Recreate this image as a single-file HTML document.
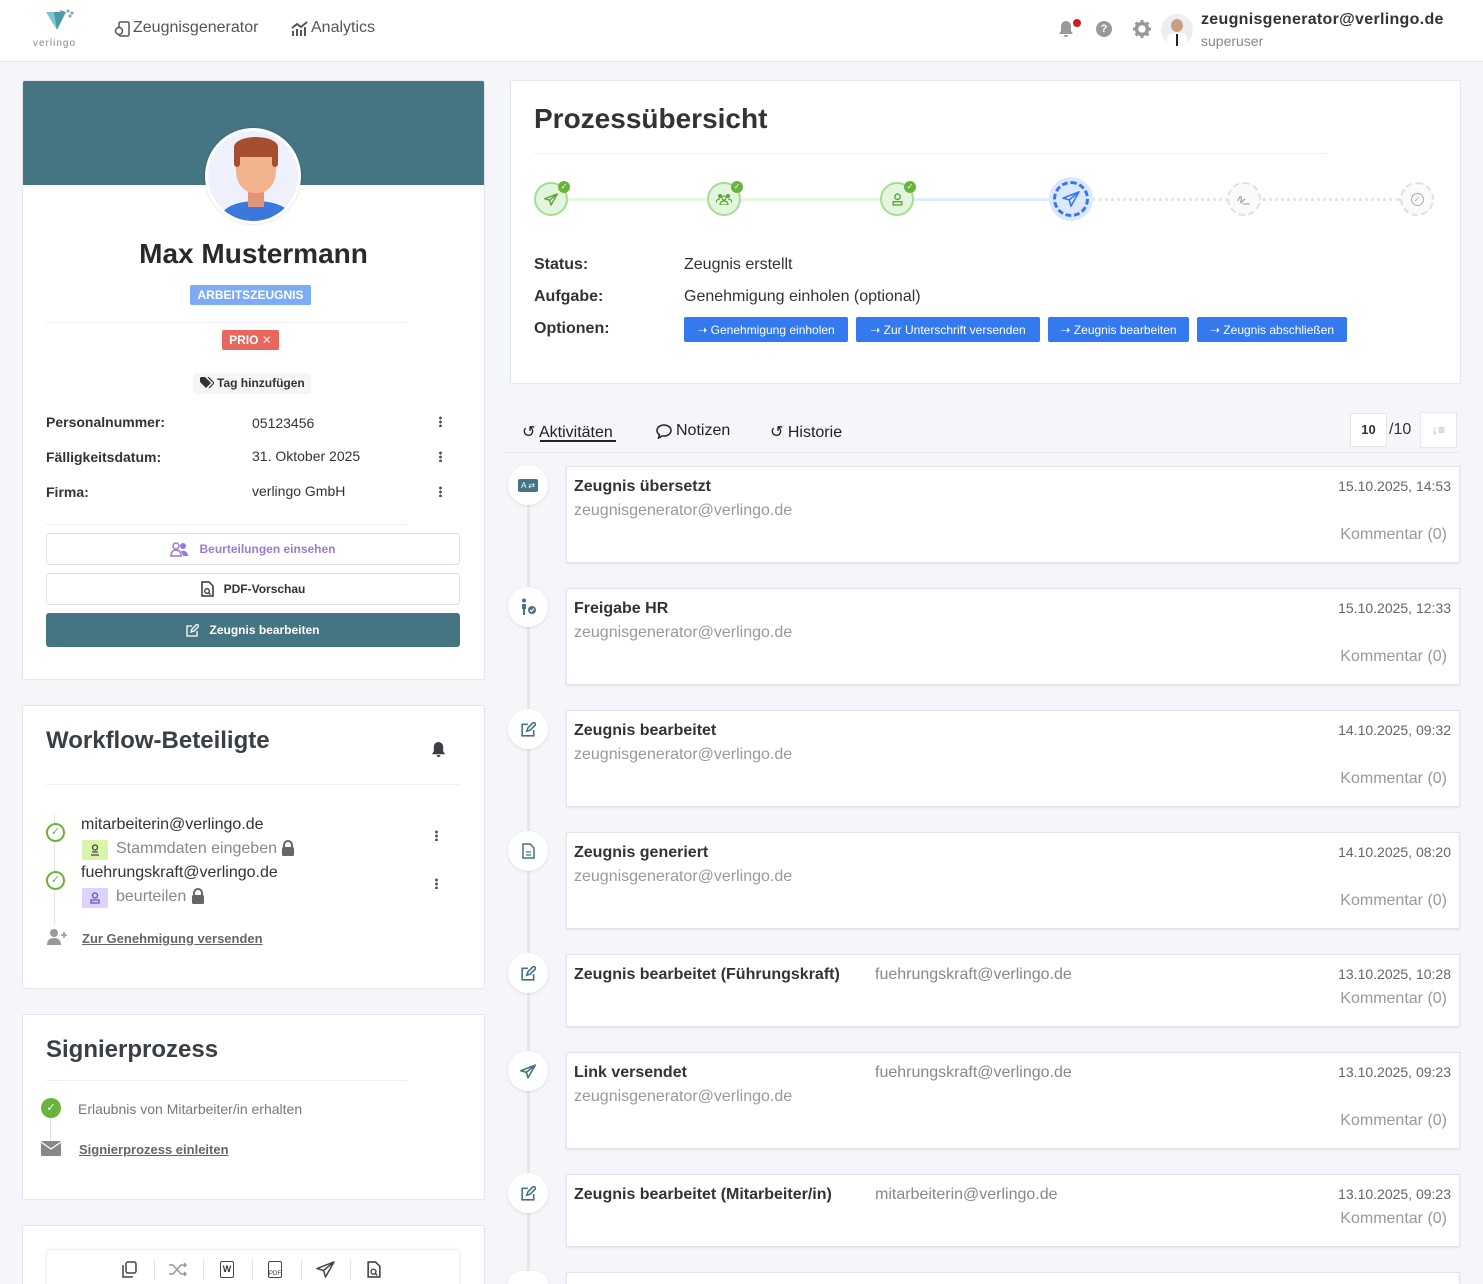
<!DOCTYPE html>
<html style="height:1284px;overflow:hidden"><head><meta charset="utf-8"><style>
*{box-sizing:border-box;margin:0;padding:0}
body{width:1483px;height:1284px;overflow:hidden;background:#f4f6f9;font-family:"Liberation Sans",sans-serif;color:#333;position:relative}
.a{position:absolute}
.card{position:absolute;background:#fff;border:1px solid #e3e6ea;border-radius:3px}
.hdr{position:absolute;left:0;top:0;width:1483px;height:62px;background:#fff;border-bottom:1px solid #e1e5ea}
.lbl{font-weight:bold;font-size:14px;color:#333}
.dots{position:absolute;width:3px;height:11px;background:radial-gradient(circle,#555 1.3px,transparent 1.6px) 0 0/3px 4px repeat-y}
.btn{position:absolute;border:1px solid #dde0e4;border-radius:3px;background:#fff;font-size:12px;font-weight:bold;display:flex;align-items:center;justify-content:center;gap:10px}
.bb{position:absolute;top:317px;height:25px;background:#3579ef;color:#fff;font-size:12px;border-radius:2px;display:flex;align-items:center;justify-content:center}
.tc{position:absolute;left:566px;width:894px;background:#fff;border:1px solid #e0e3e7;box-shadow:0 1px 2px rgba(0,0,0,.08)}
.tc b{position:absolute;left:7px;top:11px;font-size:16px;color:#333}
.tc .m{position:absolute;left:7px;top:35px;font-size:16px;color:#999}
.tc .d{position:absolute;right:8px;top:11px;font-size:14px;color:#666}
.tc .k{position:absolute;right:12px;font-size:16px;color:#999}
.tc .e{position:absolute;left:308px;top:11px;font-size:16px;color:#888}
.ic{position:absolute;left:508px;width:40px;height:40px;border-radius:50%;background:#fff;box-shadow:0 1px 3px rgba(0,0,0,.1);display:flex;align-items:center;justify-content:center}
.st{position:absolute;top:182px;width:34px;height:34px;border-radius:50%;display:flex;align-items:center;justify-content:center}
.g{background:#e3f5dc;border:2px solid #a8dc94}
.ck{position:absolute;top:-3px;right:-4px;width:12px;height:12px;border-radius:50%;background:#6ab43e;color:#fff;font-size:8px;line-height:12px;text-align:center}
.gy{background:#fafafa;border:2px dashed #e0e0e0}
</style></head><body>
<div class="hdr"></div>
<svg class="a" style="left:44px;top:8px" width="32" height="30" viewBox="0 0 32 30"><polygon points="2,4 16,4 13,22" fill="#7cc6cf"/><polygon points="10,4 22,4 13,22" fill="#4a9aa8"/><polygon points="16,2 22,4 18,10" fill="#6b8fb8"/><circle cx="24" cy="3" r="1.5" fill="#7aa"/><circle cx="28" cy="5" r="1.5" fill="#7aa"/><circle cx="26" cy="8" r="1.5" fill="#7aa"/></svg>
<div class="a" style="left:33px;top:38px;font-size:10px;color:#888;letter-spacing:1px">verlingo</div>
<svg class="a" style="left:114px;top:20px" width="17" height="18" viewBox="0 0 17 18"><rect x="5" y="2" width="10" height="14" rx="1.5" fill="none" stroke="#555" stroke-width="1.5"/><circle cx="5" cy="11" r="3.5" fill="#fff" stroke="#555" stroke-width="1.5"/></svg>
<div class="a" style="left:133px;top:19px;font-size:16px;color:#555">Zeugnisgenerator</div>
<svg class="a" style="left:291px;top:21px" width="18" height="16" viewBox="0 0 18 16"><path d="M2 15V10M6 15V8M10 15V9M14 15V6M1 7l5-4 4 3 6-5" stroke="#555" stroke-width="2" fill="none"/></svg>
<div class="a" style="left:311px;top:19px;font-size:16px;color:#555">Analytics</div>
<svg class="a" style="left:1058px;top:20px" width="16" height="18" viewBox="0 0 16 18"><path d="M8 1a5 5 0 0 0-5 5v5l-2 3h14l-2-3V6a5 5 0 0 0-5-5zM6 15a2 2 0 0 0 4 0z" fill="#999"/></svg>
<div class="a" style="left:1073px;top:19px;width:8px;height:8px;border-radius:50%;background:#c82121"></div>
<div class="a" style="left:1096px;top:21px;width:16px;height:16px;border-radius:50%;background:#999;color:#fff;font-size:11px;font-weight:bold;text-align:center;line-height:16px">?</div>
<svg class="a" style="left:1133px;top:20px" width="18" height="18" viewBox="0 0 18 18"><circle cx="9" cy="9" r="5.5" fill="none" stroke="#999" stroke-width="3.5"/><path d="M9 0v4M9 14v4M0 9h4M14 9h4M2.6 2.6l2.8 2.8M12.6 12.6l2.8 2.8M2.6 15.4l2.8-2.8M12.6 5.4l2.8-2.8" stroke="#999" stroke-width="3"/></svg>
<div class="a" style="left:1161px;top:14px;width:32px;height:32px;border-radius:50%;background:#eee;overflow:hidden"><div class="a" style="left:10px;top:5px;width:12px;height:13px;border-radius:50%;background:#c99f83"></div><div class="a" style="left:6px;top:19px;width:20px;height:14px;background:#fff;border-radius:6px 6px 0 0"></div><div class="a" style="left:15px;top:20px;width:2px;height:12px;background:#222"></div></div>
<div class="a" style="left:1201px;top:11px;font-size:16px;font-weight:bold;color:#333;letter-spacing:.3px">zeugnisgenerator@verlingo.de</div>
<div class="a" style="left:1201px;top:33px;font-size:14px;color:#888">superuser</div>

<div class="card" style="left:22px;top:80px;width:463px;height:600px;overflow:hidden">
 <div class="a" style="left:0;top:0;width:463px;height:104px;background:#457482"></div>
</div>
<div class="a" style="left:205px;top:128px;width:96px;height:96px;border-radius:50%;background:#eef0fb;border:3px solid #fff;box-shadow:0 0 2px rgba(0,0,0,.2);overflow:hidden">
 <div class="a" style="left:14px;top:70px;width:68px;height:30px;border-radius:50% 50% 0 0;background:#3a78de"></div>
 <div class="a" style="left:40px;top:56px;width:16px;height:20px;background:#e0957a"></div>
 <div class="a" style="left:28px;top:14px;width:40px;height:48px;border-radius:45%;background:#f1b38c"></div>
 <div class="a" style="left:26px;top:6px;width:44px;height:20px;border-radius:50% 50% 10% 20%;background:#a84e30"></div>
 <div class="a" style="left:26px;top:20px;width:6px;height:16px;background:#a84e30;border-radius:0 0 3px 3px"></div>
 <div class="a" style="left:64px;top:20px;width:6px;height:16px;background:#a84e30;border-radius:0 0 3px 3px"></div>
</div>
<div class="a" style="left:22px;top:238px;width:463px;text-align:center;font-size:28px;font-weight:bold;color:#2a2a2a">Max Mustermann</div>
<div class="a" style="left:190px;top:285px;width:121px;height:20px;background:#7eabf5;border-radius:2px;color:#fff;font-size:12px;font-weight:bold;text-align:center;line-height:20px">ARBEITSZEUGNIS</div>
<div class="a" style="left:46px;top:322px;width:361px;height:1px;background:#eef0f2"></div>
<div class="a" style="left:222px;top:330px;width:57px;height:20px;background:#e8685e;border-radius:2px;color:#fff;font-size:12px;font-weight:bold;text-align:center;line-height:20px">PRIO <span style="font-weight:normal;opacity:.8">✕</span></div>
<div class="a" style="left:193px;top:373px;width:118px;height:21px;background:#f4f5f7;border-radius:3px;font-size:12px;font-weight:bold;line-height:21px;color:#333;padding-left:24px">Tag hinzufügen</div>
<svg class="a" style="left:200px;top:377px" width="14" height="12" viewBox="0 0 14 12"><path d="M0 1v4l6 6 5-5-6-6H1z" fill="#333"/><path d="M8 0l6 6-5 5" stroke="#333" stroke-width="1.2" fill="none"/></svg>
<div class="a lbl" style="left:46px;top:414px">Personalnummer:</div><div class="a" style="left:252px;top:415px;font-size:14px">05123456</div><div class="dots" style="left:439px;top:416px"></div>
<div class="a lbl" style="left:46px;top:449px">Fälligkeitsdatum:</div><div class="a" style="left:252px;top:448px;font-size:14px">31. Oktober 2025</div><div class="dots" style="left:439px;top:451px"></div>
<div class="a lbl" style="left:46px;top:484px">Firma:</div><div class="a" style="left:252px;top:483px;font-size:14px">verlingo GmbH</div><div class="dots" style="left:439px;top:486px"></div>
<div class="a" style="left:46px;top:524px;width:361px;height:1px;background:#eef0f2"></div>
<div class="btn" style="left:46px;top:533px;width:414px;height:32px;color:#9a7ad8"><svg width="19" height="15" viewBox="0 0 19 15"><circle cx="6" cy="4" r="3" fill="none" stroke="#9a7ad8" stroke-width="1.5"/><path d="M1 14c0-4 2-6 5-6s5 2 5 6z" fill="none" stroke="#9a7ad8" stroke-width="1.5"/><circle cx="13" cy="4" r="3" fill="#9a7ad8"/><path d="M11 9c4-1 7 1 7 5h-5" fill="#9a7ad8"/></svg>Beurteilungen einsehen</div>
<div class="btn" style="left:46px;top:573px;width:414px;height:32px;color:#333"><svg width="13" height="16" viewBox="0 0 13 16"><path d="M1 1h7l4 4v10H1z" fill="none" stroke="#333" stroke-width="1.5"/><circle cx="6" cy="10" r="2.3" fill="none" stroke="#333" stroke-width="1.3"/><path d="M7.5 11.5l2 2" stroke="#333" stroke-width="1.3"/></svg>PDF-Vorschau</div>
<div class="btn" style="left:46px;top:613px;width:414px;height:34px;background:#457482;border-color:#457482;color:#fff"><svg width="13" height="13" viewBox="0 0 13 13"><path d="M6 2H1v10h10V7" fill="none" stroke="#fff" stroke-width="1.3"/><path d="M5 8l1-3 5-5 2 2-5 5z" fill="none" stroke="#fff" stroke-width="1.3"/></svg>Zeugnis bearbeiten</div>

<div class="card" style="left:22px;top:705px;width:463px;height:284px"></div>
<div class="a" style="left:46px;top:727px;font-size:24px;font-weight:bold;color:#3a3f45">Workflow-Beteiligte</div>
<svg class="a" style="left:431px;top:741px" width="15" height="17" viewBox="0 0 16 18"><path d="M8 1a5 5 0 0 0-5 5v5l-2 3h14l-2-3V6a5 5 0 0 0-5-5zM6 15a2 2 0 0 0 4 0z" fill="#3a3f45"/></svg>
<div class="a" style="left:46px;top:784px;width:414px;height:1px;background:#eef0f2"></div>
<div class="a" style="left:54px;top:814px;width:1px;height:110px;background:#e4e4e4"></div>
<div class="a" style="left:46px;top:823px;width:19px;height:19px;border-radius:50%;border:2px solid #6ab43e;background:#fff;color:#6ab43e;font-size:11px;text-align:center;line-height:15px">✓</div>
<div class="a" style="left:81px;top:816px;font-size:16px;color:#333">mitarbeiterin@verlingo.de</div>
<div class="a" style="left:82px;top:840px;width:26px;height:20px;background:#d8f5a8;border-radius:2px"><svg class="a" style="left:8px;top:4px" width="10" height="12" viewBox="0 0 10 12"><circle cx="5" cy="3.5" r="2.5" fill="none" stroke="#444" stroke-width="1.3"/><path d="M1 11h8M2 8h6" stroke="#444" stroke-width="1.3"/></svg></div>
<div class="a" style="left:116px;top:840px;font-size:16px;color:#888">Stammdaten eingeben</div>
<svg class="a" style="left:281px;top:840px" width="14" height="16" viewBox="0 0 14 16"><path d="M3 7V5a4 4 0 0 1 8 0v2" fill="none" stroke="#666" stroke-width="2"/><rect x="1" y="7" width="12" height="9" rx="1.5" fill="#666"/></svg>
<div class="dots" style="left:435px;top:830px"></div>
<div class="a" style="left:46px;top:871px;width:19px;height:19px;border-radius:50%;border:2px solid #6ab43e;background:#fff;color:#6ab43e;font-size:11px;text-align:center;line-height:15px">✓</div>
<div class="a" style="left:81px;top:864px;font-size:16px;color:#333">fuehrungskraft@verlingo.de</div>
<div class="a" style="left:82px;top:888px;width:26px;height:20px;background:#dcd2fa;border-radius:2px"><svg class="a" style="left:8px;top:4px" width="10" height="12" viewBox="0 0 10 12"><circle cx="5" cy="3.5" r="2.5" fill="none" stroke="#6a4fc0" stroke-width="1.3"/><path d="M1 11h8V8H1z" fill="none" stroke="#6a4fc0" stroke-width="1.3"/></svg></div>
<div class="a" style="left:116px;top:888px;font-size:16px;color:#888">beurteilen</div>
<svg class="a" style="left:191px;top:888px" width="14" height="16" viewBox="0 0 14 16"><path d="M3 7V5a4 4 0 0 1 8 0v2" fill="none" stroke="#666" stroke-width="2"/><rect x="1" y="7" width="12" height="9" rx="1.5" fill="#666"/></svg>
<div class="dots" style="left:435px;top:878px"></div>
<svg class="a" style="left:47px;top:929px" width="21" height="16" viewBox="0 0 21 16"><circle cx="7" cy="4" r="4" fill="#999"/><path d="M0 16c0-5 3-7 7-7s7 2 7 7z" fill="#999"/><path d="M17 3v6M14 6h6" stroke="#999" stroke-width="1.6"/></svg>
<div class="a" style="left:82px;top:931px;font-size:13px;font-weight:bold;color:#666;text-decoration:underline">Zur Genehmigung versenden</div>

<div class="card" style="left:22px;top:1014px;width:463px;height:186px"></div>
<div class="a" style="left:46px;top:1036px;font-size:24px;font-weight:bold;color:#3a3f45">Signierprozess</div>
<div class="a" style="left:46px;top:1080px;width:361px;height:1px;background:#eef0f2"></div>
<div class="a" style="left:50px;top:1118px;width:1px;height:24px;background:#e0e0e0"></div>
<div class="a" style="left:41px;top:1098px;width:20px;height:20px;border-radius:50%;background:#6ab43e;color:#fff;font-size:11px;text-align:center;line-height:20px">✓</div>
<div class="a" style="left:78px;top:1101px;font-size:14px;color:#777">Erlaubnis von Mitarbeiter/in erhalten</div>
<svg class="a" style="left:41px;top:1141px" width="20" height="15" viewBox="0 0 20 15"><rect width="20" height="15" rx="1" fill="#888"/><path d="M0 1l10 7 10-7" stroke="#fff" stroke-width="1.3" fill="none"/></svg>
<div class="a" style="left:79px;top:1142px;font-size:13px;font-weight:bold;color:#666;text-decoration:underline">Signierprozess einleiten</div>

<div class="card" style="left:22px;top:1225px;width:463px;height:70px"></div>
<div class="a" style="left:46px;top:1249px;width:414px;height:40px;background:#fff;border:1px solid #eceef0;border-radius:4px;box-shadow:0 1px 3px rgba(0,0,0,.06)"></div>
<svg class="a" style="left:121px;top:1261px" width="16" height="17" viewBox="0 0 16 17"><rect x="5" y="1" width="10" height="11" rx="2" fill="none" stroke="#444" stroke-width="1.5"/><path d="M3 5H2v11h9v-1" fill="none" stroke="#444" stroke-width="1.5"/></svg>
<div class="a" style="left:154px;top:1260px;width:1px;height:20px;background:#e4e4e4"></div>
<svg class="a" style="left:169px;top:1262px" width="19" height="15" viewBox="0 0 19 15"><path d="M0 3h4l8 9h5M0 12h4l8-9h5M15 1l2 2-2 2M15 10l2 2-2 2" stroke="#999" stroke-width="1.5" fill="none"/></svg>
<div class="a" style="left:203px;top:1260px;width:1px;height:20px;background:#e4e4e4"></div>
<div class="a" style="left:220px;top:1261px;width:14px;height:17px;border:1.5px solid #444;border-radius:2px;font-size:9px;font-weight:bold;text-align:center;line-height:15px">W</div>
<div class="a" style="left:252px;top:1260px;width:1px;height:20px;background:#e4e4e4"></div>
<div class="a" style="left:268px;top:1261px;width:14px;height:17px;border:1.5px solid #444;border-radius:2px;font-size:6px;text-align:right;line-height:24px">PDF</div>
<div class="a" style="left:301px;top:1260px;width:1px;height:20px;background:#e4e4e4"></div>
<svg class="a" style="left:316px;top:1261px" width="19" height="17" viewBox="0 0 20 18"><path d="M19 1L1 8l7 2 2 7z M8 10l11-9" stroke="#444" stroke-width="1.6" fill="none" stroke-linejoin="round"/></svg>
<div class="a" style="left:350px;top:1260px;width:1px;height:20px;background:#e4e4e4"></div>
<svg class="a" style="left:367px;top:1261px" width="14" height="17" viewBox="0 0 13 16"><path d="M1 1h7l4 4v10H1z" fill="none" stroke="#444" stroke-width="1.5"/><circle cx="6" cy="10" r="2.3" fill="none" stroke="#444" stroke-width="1.3"/><path d="M7.5 11.5l2 2" stroke="#444" stroke-width="1.3"/></svg>

<div class="card" style="left:510px;top:80px;width:951px;height:304px"></div>
<div class="a" style="left:534px;top:103px;font-size:28px;font-weight:bold;color:#333">Prozessübersicht</div>
<div class="a" style="left:534px;top:153px;width:793px;height:1px;background:#eef0f2"></div>
<div class="a" style="left:568px;top:198px;width:140px;height:3px;background:#e5f7dd"></div>
<div class="a" style="left:741px;top:198px;width:140px;height:3px;background:#e5f7dd"></div>
<div class="a" style="left:914px;top:198px;width:135px;height:3px;background:#e0ecfb"></div>
<div class="a" style="left:1092px;top:198px;width:136px;height:0;border-top:3px dotted #e6e6e6"></div>
<div class="a" style="left:1262px;top:198px;width:138px;height:0;border-top:3px dotted #e6e6e6"></div>
<div class="st g" style="left:534px"><svg width="14" height="13" viewBox="0 0 20 18"><path d="M19 1L1 8l7 2 2 7z M8 10l11-9" stroke="#5aa63c" stroke-width="2" fill="none" stroke-linejoin="round"/></svg><div class="ck">✓</div></div>
<div class="st g" style="left:707px"><svg width="16" height="12" viewBox="0 0 16 12"><circle cx="4" cy="3" r="2" fill="#5aa63c"/><circle cx="12" cy="3" r="2" fill="#5aa63c"/><circle cx="8" cy="5" r="2" fill="none" stroke="#5aa63c" stroke-width="1.2"/><path d="M0 10c0-3 2-4 4-4M16 10c0-3-2-4-4-4M4 12c0-3 2-4 4-4s4 1 4 4z" fill="none" stroke="#5aa63c" stroke-width="1.3"/></svg><div class="ck">✓</div></div>
<div class="st g" style="left:880px"><svg width="11" height="13" viewBox="0 0 10 12"><circle cx="5" cy="3.5" r="2.5" fill="none" stroke="#5aa63c" stroke-width="1.3"/><path d="M1 11h8V8H1z" fill="none" stroke="#5aa63c" stroke-width="1.3"/></svg><div class="ck">✓</div></div>
<div class="a" style="left:1049px;top:177px;width:44px;height:44px;border-radius:50%;background:#dce9fc;display:flex;align-items:center;justify-content:center"><div style="width:36px;height:36px;border-radius:50%;border:3px dashed #3579ef;display:flex;align-items:center;justify-content:center"><svg width="18" height="16" viewBox="0 0 20 18"><path d="M19 1L1 8l7 2 2 7z M8 10l11-9" stroke="#3579ef" stroke-width="1.8" fill="none" stroke-linejoin="round"/></svg></div></div>
<div class="st gy" style="left:1227px"><svg width="14" height="12" viewBox="0 0 14 12"><path d="M1 8c2-6 4-6 3 0s3-4 4-1M6 11h7" stroke="#aaa" stroke-width="1.3" fill="none"/></svg></div>
<div class="st gy" style="left:1400px"><div style="width:13px;height:13px;border-radius:50%;border:1.3px solid #aaa;font-size:8px;color:#aaa;text-align:center;line-height:11px">✓</div></div>
<div class="a" style="left:534px;top:256px;font-size:16px;font-weight:bold">Status:</div><div class="a" style="left:684px;top:256px;font-size:16px">Zeugnis erstellt</div>
<div class="a" style="left:534px;top:288px;font-size:16px;font-weight:bold">Aufgabe:</div><div class="a" style="left:684px;top:288px;font-size:16px">Genehmigung einholen (optional)</div>
<div class="a" style="left:534px;top:320px;font-size:16px;font-weight:bold">Optionen:</div>
<div class="bb" style="left:684px;width:164px">➝ Genehmigung einholen</div>
<div class="bb" style="left:856px;width:184px">➝ Zur Unterschrift versenden</div>
<div class="bb" style="left:1048px;width:141px">➝ Zeugnis bearbeiten</div>
<div class="bb" style="left:1197px;width:150px">➝ Zeugnis abschließen</div>

<div class="a" style="left:522px;top:422px;font-size:16px;color:#222">↺ Aktivitäten</div>
<div class="a" style="left:540px;top:440px;width:76px;height:2px;background:#222"></div>
<svg class="a" style="left:656px;top:424px" width="16" height="15" viewBox="0 0 16 15"><path d="M8 1C4 1 1 3.5 1 6.5c0 1.8 1 3.2 2.5 4.2L2.5 14l4-2.2c.5.1 1 .2 1.5.2 4 0 7-2.5 7-5.5S12 1 8 1z" fill="none" stroke="#222" stroke-width="1.5"/></svg>
<div class="a" style="left:676px;top:422px;font-size:16px;color:#222">Notizen</div>
<div class="a" style="left:770px;top:422px;font-size:16px;color:#222">↺ Historie</div>
<div class="a" style="left:1350px;top:413px;width:37px;height:34px;background:#fff;border:1px solid #e6e6e6;font-size:13px;font-weight:bold;text-align:center;line-height:32px">10</div>
<div class="a" style="left:1389px;top:421px;font-size:16px;color:#333">/10</div>
<div class="a" style="left:1420px;top:412px;width:37px;height:36px;background:#fff;border:1px solid #e6e6e6;font-size:12px;color:#aaa;text-align:center;line-height:34px">↓≡</div>
<div class="a" style="left:504px;top:452px;width:957px;height:1px;background:#e9ecef"></div>

<div class="a" style="left:527px;top:470px;width:3px;height:820px;background:#e5e7ea"></div>

<div class="ic" style="top:465px"><div style="width:20px;height:13px;background:#457482;border-radius:2px;color:#fff;font-size:8px;line-height:13px;text-align:center">A ⇄</div></div>
<div class="tc" style="top:466px;height:97px"><b>Zeugnis übersetzt</b><div class="m">zeugnisgenerator@verlingo.de</div><div class="d">15.10.2025, 14:53</div><div class="k" style="top:59px">Kommentar (0)</div></div>

<div class="ic" style="top:587px"><svg width="18" height="18" viewBox="0 0 18 18"><circle cx="5" cy="2.5" r="2" fill="#457482"/><path d="M3 6h4v5H6v6H4v-6H3z" fill="#457482"/><circle cx="13" cy="12" r="4" fill="#457482"/><path d="M11 12l1.5 1.5 2.5-3" stroke="#fff" stroke-width="1.2" fill="none"/></svg></div>
<div class="tc" style="top:588px;height:97px"><b>Freigabe HR</b><div class="m">zeugnisgenerator@verlingo.de</div><div class="d">15.10.2025, 12:33</div><div class="k" style="top:59px">Kommentar (0)</div></div>

<div class="ic" style="top:709px"><svg width="15" height="15" viewBox="0 0 13 13"><path d="M6 2H1v10h10V7" fill="none" stroke="#457482" stroke-width="1.4"/><path d="M5 8l1-3 5-5 2 2-5 5z" fill="none" stroke="#457482" stroke-width="1.4"/></svg></div>
<div class="tc" style="top:710px;height:97px"><b>Zeugnis bearbeitet</b><div class="m">zeugnisgenerator@verlingo.de</div><div class="d">14.10.2025, 09:32</div><div class="k" style="top:59px">Kommentar (0)</div></div>

<div class="ic" style="top:831px"><svg width="13" height="16" viewBox="0 0 13 16"><path d="M1 1h7l4 4v10H1z" fill="none" stroke="#457482" stroke-width="1.5"/><path d="M4 9h5M4 12h5" stroke="#457482" stroke-width="1.3"/></svg></div>
<div class="tc" style="top:832px;height:97px"><b>Zeugnis generiert</b><div class="m">zeugnisgenerator@verlingo.de</div><div class="d">14.10.2025, 08:20</div><div class="k" style="top:59px">Kommentar (0)</div></div>

<div class="ic" style="top:953px"><svg width="15" height="15" viewBox="0 0 13 13"><path d="M6 2H1v10h10V7" fill="none" stroke="#457482" stroke-width="1.4"/><path d="M5 8l1-3 5-5 2 2-5 5z" fill="none" stroke="#457482" stroke-width="1.4"/></svg></div>
<div class="tc" style="top:954px;height:73px"><b>Zeugnis bearbeitet (Führungskraft)</b><div class="e">fuehrungskraft@verlingo.de</div><div class="d">13.10.2025, 10:28</div><div class="k" style="top:35px">Kommentar (0)</div></div>

<div class="ic" style="top:1051px"><svg width="16" height="15" viewBox="0 0 20 18"><path d="M19 1L1 8l7 2 2 7z M8 10l11-9" stroke="#457482" stroke-width="2" fill="none" stroke-linejoin="round"/></svg></div>
<div class="tc" style="top:1052px;height:97px"><b>Link versendet</b><div class="e">fuehrungskraft@verlingo.de</div><div class="m">zeugnisgenerator@verlingo.de</div><div class="d">13.10.2025, 09:23</div><div class="k" style="top:59px">Kommentar (0)</div></div>

<div class="ic" style="top:1173px"><svg width="15" height="15" viewBox="0 0 13 13"><path d="M6 2H1v10h10V7" fill="none" stroke="#457482" stroke-width="1.4"/><path d="M5 8l1-3 5-5 2 2-5 5z" fill="none" stroke="#457482" stroke-width="1.4"/></svg></div>
<div class="tc" style="top:1174px;height:73px"><b>Zeugnis bearbeitet (Mitarbeiter/in)</b><div class="e">mitarbeiterin@verlingo.de</div><div class="d">13.10.2025, 09:23</div><div class="k" style="top:35px">Kommentar (0)</div></div>

<div class="ic" style="top:1271px;height:13px;border-radius:20px 20px 0 0"></div>
<div class="tc" style="top:1272px;height:12px;border-bottom:none"></div>
</body></html>
